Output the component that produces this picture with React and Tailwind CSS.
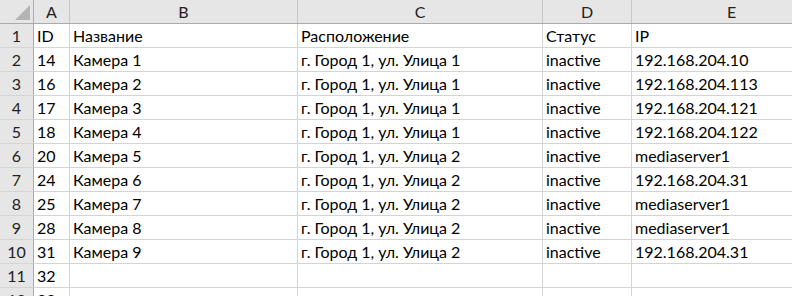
import React from 'react';

const columns = ['A', 'B', 'C', 'D', 'E'];

const rows = [
  ['ID', 'Название', 'Расположение', 'Статус', 'IP'],
  ['14', 'Камера 1', 'г. Город 1, ул. Улица 1', 'inactive', '192.168.204.10'],
  ['16', 'Камера 2', 'г. Город 1, ул. Улица 1', 'inactive', '192.168.204.113'],
  ['17', 'Камера 3', 'г. Город 1, ул. Улица 1', 'inactive', '192.168.204.121'],
  ['18', 'Камера 4', 'г. Город 1, ул. Улица 1', 'inactive', '192.168.204.122'],
  ['20', 'Камера 5', 'г. Город 1, ул. Улица 2', 'inactive', 'mediaserver1'],
  ['24', 'Камера 6', 'г. Город 1, ул. Улица 2', 'inactive', '192.168.204.31'],
  ['25', 'Камера 7', 'г. Город 1, ул. Улица 2', 'inactive', 'mediaserver1'],
  ['28', 'Камера 8', 'г. Город 1, ул. Улица 2', 'inactive', 'mediaserver1'],
  ['31', 'Камера 9', 'г. Город 1, ул. Улица 2', 'inactive', '192.168.204.31'],
  ['32', '', '', '', ''],
  ['33', '', '', '', ''],
];

const gridCols = 'grid grid-cols-[34px_36px_228px_245px_89px_200px]';

const App = () => {
  return (
    <div
      className="w-[792px] h-[296px] overflow-hidden bg-white text-[16px] leading-none text-black"
      style={{ fontFamily: 'Lato, "Liberation Sans", sans-serif' }}
    >
      {/* column letters */}
      <div className={`${gridCols} h-6 bg-[#e6e6e6] border-b border-[#ababab]`}>
        <div className="relative border-r border-[#ababab]">
          {/* select-all corner triangle */}
          <div className="absolute right-[3px] bottom-[3px] w-0 h-0 border-l-[15px] border-l-transparent border-b-[15px] border-b-[#b4b4b4]" />
        </div>
        {columns.map((c) => (
          <div key={c} className="flex items-end justify-center pb-[3px] border-r border-[#c8c8c8] text-[#222]">
            {c}
          </div>
        ))}
      </div>

      {rows.map((row, i) => (
        <div key={i} className={`${gridCols} h-6`}>
          <div className="flex items-end justify-center pb-[3px] bg-[#e6e6e6] border-r border-b border-r-[#ababab] border-b-[#d4d4d4] text-[#222]">
            {i + 1}
          </div>
          {row.map((cell, j) => (
            <div key={j} className="flex items-end pl-[3px] pb-[3px] border-r border-b border-[#d4d4d4] whitespace-nowrap overflow-hidden">
              {cell}
            </div>
          ))}
        </div>
      ))}
    </div>
  );
};

export default App;
